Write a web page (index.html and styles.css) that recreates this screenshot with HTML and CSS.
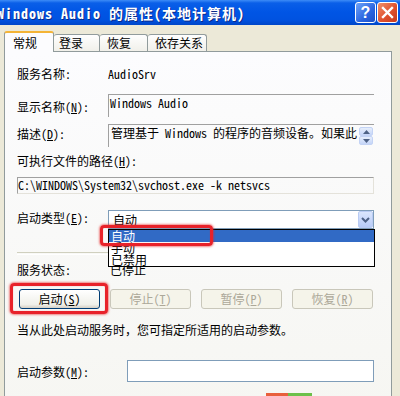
FILE: index.html
```html
<!DOCTYPE html>
<html lang="zh-CN">
<head>
    <meta charset="UTF-8">
    <title>Windows Audio 的属性(本地计算机)</title>
    <link rel="stylesheet" href="styles.css">
</head>
<body>
    <div class="window">
        <!-- Title bar -->
        <div class="titlebar">
            <div class="title">Windows Audio 的属性(本地计算机)</div>
            <div class="caption-btns">
                <div class="cap-btn help">?</div>
                <div class="cap-btn close">
                    <svg width="13" height="13" viewBox="0 0 13 13"><path d="M2 2 L11 11 M11 2 L2 11" stroke="#fff" stroke-width="2.4" stroke-linecap="square"/></svg>
                </div>
            </div>
        </div>

        <div class="dialog">
            <div class="tabs">
                <div class="tab active">常规</div>
                <div class="tab">登录</div>
                <div class="tab">恢复</div>
                <div class="tab">依存关系</div>
            </div>

            <div class="panel">
                <div class="row row-name">
                    <div class="label">服务名称:</div>
                    <div class="value mono">AudioSrv</div>
                </div>

                <div class="row row-display">
                    <div class="label">显示名称(<u>N</u>):</div>
                    <div class="field mono">Windows Audio</div>
                </div>

                <div class="row row-desc">
                    <div class="label">描述(<u>D</u>):</div>
                    <div class="field mono">
                        管理基于 Windows 的程序的音频设备。如果此
                        <div class="spin">
                            <div class="spin-btn"><svg width="7" height="4" viewBox="0 0 7 4"><path d="M0 4 L3.5 0 L7 4 Z" fill="#4d6185"/></svg></div>
                            <div class="spin-btn"><svg width="7" height="4" viewBox="0 0 7 4"><path d="M0 0 L3.5 4 L7 0 Z" fill="#4d6185"/></svg></div>
                        </div>
                    </div>
                </div>

                <div class="line-label">可执行文件的路径(<u>H</u>):</div>
                <div class="path-box mono">C:\WINDOWS\System32\svchost.exe -k netsvcs</div>

                <div class="row row-type">
                    <div class="label">启动类型(<u>E</u>):</div>
                    <div class="combo">
                        <span class="combo-text">自动</span>
                        <div class="combo-arrow">
                            <svg width="9" height="6" viewBox="0 0 9 6"><path d="M1 1 L4.5 4.5 L8 1" fill="none" stroke="#4d6185" stroke-width="2"/></svg>
                        </div>
                        <div class="dropdown">
                            <div class="opt selected">自动</div>
                            <div class="opt">手动</div>
                            <div class="opt">已禁用</div>
                            <div class="mark mark-opt"></div>
                        </div>
                    </div>
                </div>

                <div class="separator"></div>

                <div class="row row-status">
                    <div class="label">服务状态:</div>
                    <div class="value">已停止</div>
                </div>

                <div class="buttons">
                    <div class="btn">启动(<u>S</u>)<div class="mark mark-btn"></div></div>
                    <div class="btn disabled">停止(<u>T</u>)</div>
                    <div class="btn disabled">暂停(<u>P</u>)</div>
                    <div class="btn disabled">恢复(<u>R</u>)</div>
                </div>

                <div class="hint">当从此处启动服务时，您可指定所适用的启动参数。</div>

                <div class="row row-params">
                    <div class="label wide">启动参数(<u>M</u>):</div>
                    <div class="input"></div>
                </div>
            </div>
        </div>

        <div class="corner-bits"><span class="bit-red"></span><span class="bit-green"></span></div>
    </div>
</body>
</html>
```

FILE: styles.css
```css
/* Global */
body {
    margin: 0;
    padding: 0;
    width: 400px;
    height: 396px;
    overflow: hidden;
    background-color: #ece9d8;
    font-family: "Noto Sans Mono CJK SC", "Noto Sans CJK SC", sans-serif;
    font-size: 12px;
    color: #000;
}

.window {
    position: relative;
    width: 400px;
    height: 396px;
    overflow: hidden;
}

u {
    text-decoration: underline;
    text-underline-offset: 1px;
}

/* Title bar */
.titlebar {
    height: 25px;
    display: flex;
    align-items: center;
    background: linear-gradient(#3d8cf7 0, #0a5fe8 3px, #0055e5 12px, #0052e0 20px, #0046c8 25px);
}

.title {
    margin-left: -3px;
    color: #fff;
    font-weight: bold;
    font-size: 14px;
    letter-spacing: 1px;
    white-space: nowrap;
    text-shadow: 1px 1px 0 #0a2a8a;
}

.caption-btns {
    margin-left: auto;
    margin-right: 2px;
    display: flex;
    gap: 1px;
}

.cap-btn {
    width: 19px;
    height: 19px;
    border: 1px solid #fff;
    border-radius: 3px;
    display: flex;
    align-items: center;
    justify-content: center;
    color: #fff;
    font-family: "Liberation Sans", sans-serif;
    font-weight: bold;
    font-size: 16px;
}

.help {
    background: linear-gradient(135deg, #6fa3f8, #2a65e0 60%, #1c4fc8);
}

.close {
    background: linear-gradient(135deg, #f0916c, #e0512e 55%, #c73a1c);
}

/* Dialog body and tabs */
.dialog {
    padding-top: 6px;
}

.tabs {
    display: flex;
    align-items: flex-end;
    height: 20px;
    margin-left: 4px;
    position: relative;
    z-index: 2;
}

.tab {
    height: 17px;
    line-height: 16px;
    padding: 0 6px 0 5px;
    border: 1px solid #919b9c;
    border-bottom: none;
    border-left: none;
    border-radius: 3px 3px 0 0;
    background: linear-gradient(#fefefe, #f1f0ea);
    box-sizing: border-box;
    white-space: nowrap;
}

.tab:nth-child(2) { width: 46px; }
.tab:nth-child(3) { width: 48px; padding-left: 7px; }
.tab:nth-child(4) { width: 59px; padding-left: 7px; }

.tab.active {
    width: 50px;
    height: 21px;
    margin-bottom: -1px;
    padding-left: 8px;
    line-height: 19px;
    border-left: 1px solid #919b9c;
    border-top: 2px solid #f4b436;
    background: #fcfcfe;
}

.panel {
    margin-left: 4px;
    width: 388px;
    height: 360px;
    box-sizing: border-box;
    border: 1px solid #919b9c;
    background: linear-gradient(#fcfcfe, #f6f6f2);
    padding: 0 17px 0 12px;
}

/* Rows */
.row {
    display: flex;
    align-items: flex-start;
}

.label {
    width: 91px;
    flex-shrink: 0;
    line-height: 14px;
    white-space: nowrap;
}

.label.wide {
    width: 110px;
}

.value {
    line-height: 14px;
}

.row-name {
    margin-top: 15px;
}

.row-display {
    margin-top: 13px;
}

.row-display .label {
    padding-top: 6px;
}

.field {
    position: relative;
    flex: 1;
    height: 23px;
    box-sizing: border-box;
    border-top: 1px solid #a0a0a0;
    border-left: 1px solid #a0a0a0;
    padding: 1px 0 0 1px;
    line-height: 14px;
    white-space: nowrap;
    overflow: hidden;
}

.row-desc {
    margin-top: 7px;
}

.row-desc .label {
    padding-top: 3px;
}

.row-desc .field {
    padding-left: 2px;
}

.spin {
    position: absolute;
    right: 1px;
    top: 2px;
    display: flex;
    flex-direction: column;
}

.spin-btn {
    width: 14px;
    height: 9px;
    box-sizing: border-box;
    border: 1px solid #c3d3f5;
    border-radius: 2px;
    background: linear-gradient(#e6eefc, #c5d5f8);
    display: flex;
    align-items: center;
    justify-content: center;
}

.line-label {
    margin-top: 7px;
    line-height: 14px;
}

.path-box {
    margin-top: 9px;
    height: 17px;
    box-sizing: border-box;
    border-top: 1px solid #a0a0a0;
    border-left: 1px solid #a0a0a0;
    border-right: 1px solid #e4e2da;
    border-bottom: 1px solid #e4e2da;
    line-height: 14px;
    white-space: nowrap;
}

/* Combo box */
.row-type {
    margin-top: 16px;
}

.row-type .label {
    padding-top: 1px;
}

.combo {
    position: relative;
    flex: 1;
    height: 19px;
    box-sizing: border-box;
    border: 1px solid #7f9db9;
    background: #fff;
    display: flex;
    align-items: center;
}

.combo-text {
    padding-left: 4px;
    line-height: 14px;
}

.combo-arrow {
    margin-left: auto;
    margin-right: 0;
    width: 15px;
    height: 17px;
    box-sizing: border-box;
    border: 1px solid #b9cbf3;
    border-radius: 2px;
    background: linear-gradient(#dbe6fd, #b7cbf7);
    display: flex;
    align-items: center;
    justify-content: center;
}

.dropdown {
    position: absolute;
    z-index: 3;
    left: -1px;
    top: 18px;
    width: 267px;
    box-sizing: border-box;
    border: 1px solid #000;
    background: #fff;
}

.opt {
    height: 12px;
    line-height: 12px;
    padding-left: 2px;
}

.opt.selected {
    background: #316ac5;
    color: #fff;
}

.mark {
    position: absolute;
    border: 3px solid #e8222a;
    border-radius: 4px;
    box-shadow: 0 0 2px 1px rgba(232, 40, 40, 0.55), inset 0 0 1px rgba(232, 40, 40, 0.6);
    pointer-events: none;
}

.mark-opt {
    left: -9px;
    top: -5px;
    width: 107px;
    height: 15px;
}

/* Separator */
.separator {
    margin-top: 23px;
    height: 1px;
    border-top: 1px solid #d0d0bf;
    border-bottom: 1px solid #fff;
}

.row-status {
    margin-top: 8px;
}

.row-status .value {
    padding-left: 2px;
}

/* Buttons */
.buttons {
    margin-top: 12px;
    margin-left: 2px;
    display: flex;
    gap: 10px;
}

.btn {
    position: relative;
    width: 81px;
    height: 20px;
    box-sizing: border-box;
    border: 1px solid #003c74;
    border-radius: 3px;
    background: linear-gradient(#ffffff, #f0f0ea 80%, #d6d0c5);
    text-align: center;
    line-height: 18px;
}

.btn.disabled {
    border-color: #c9c7ba;
    background: #f5f4ea;
    color: #aca899;
}

.mark-btn {
    left: -10px;
    top: -7px;
    width: 92px;
    height: 25px;
}

.hint {
    margin-top: 14px;
    line-height: 14px;
    white-space: nowrap;
}

.row-params {
    margin-top: 23px;
}

.row-params .label {
    padding-top: 5px;
}

.input {
    flex: 1;
    height: 22px;
    box-sizing: border-box;
    border: 1px solid #7f9db9;
    background: #fff;
}

.mono {
    font-family: "Noto Sans Mono CJK SC", "Liberation Mono", "Noto Sans CJK SC", monospace;
}

/* Bits of coloured buttons peeking at the bottom edge */
.corner-bits {
    position: absolute;
    left: 266px;
    top: 393px;
    display: flex;
}

.bit-red {
    width: 22px;
    height: 3px;
    background: #e8603c;
}

.bit-green {
    width: 24px;
    height: 3px;
    background: #6cc04a;
}
```
